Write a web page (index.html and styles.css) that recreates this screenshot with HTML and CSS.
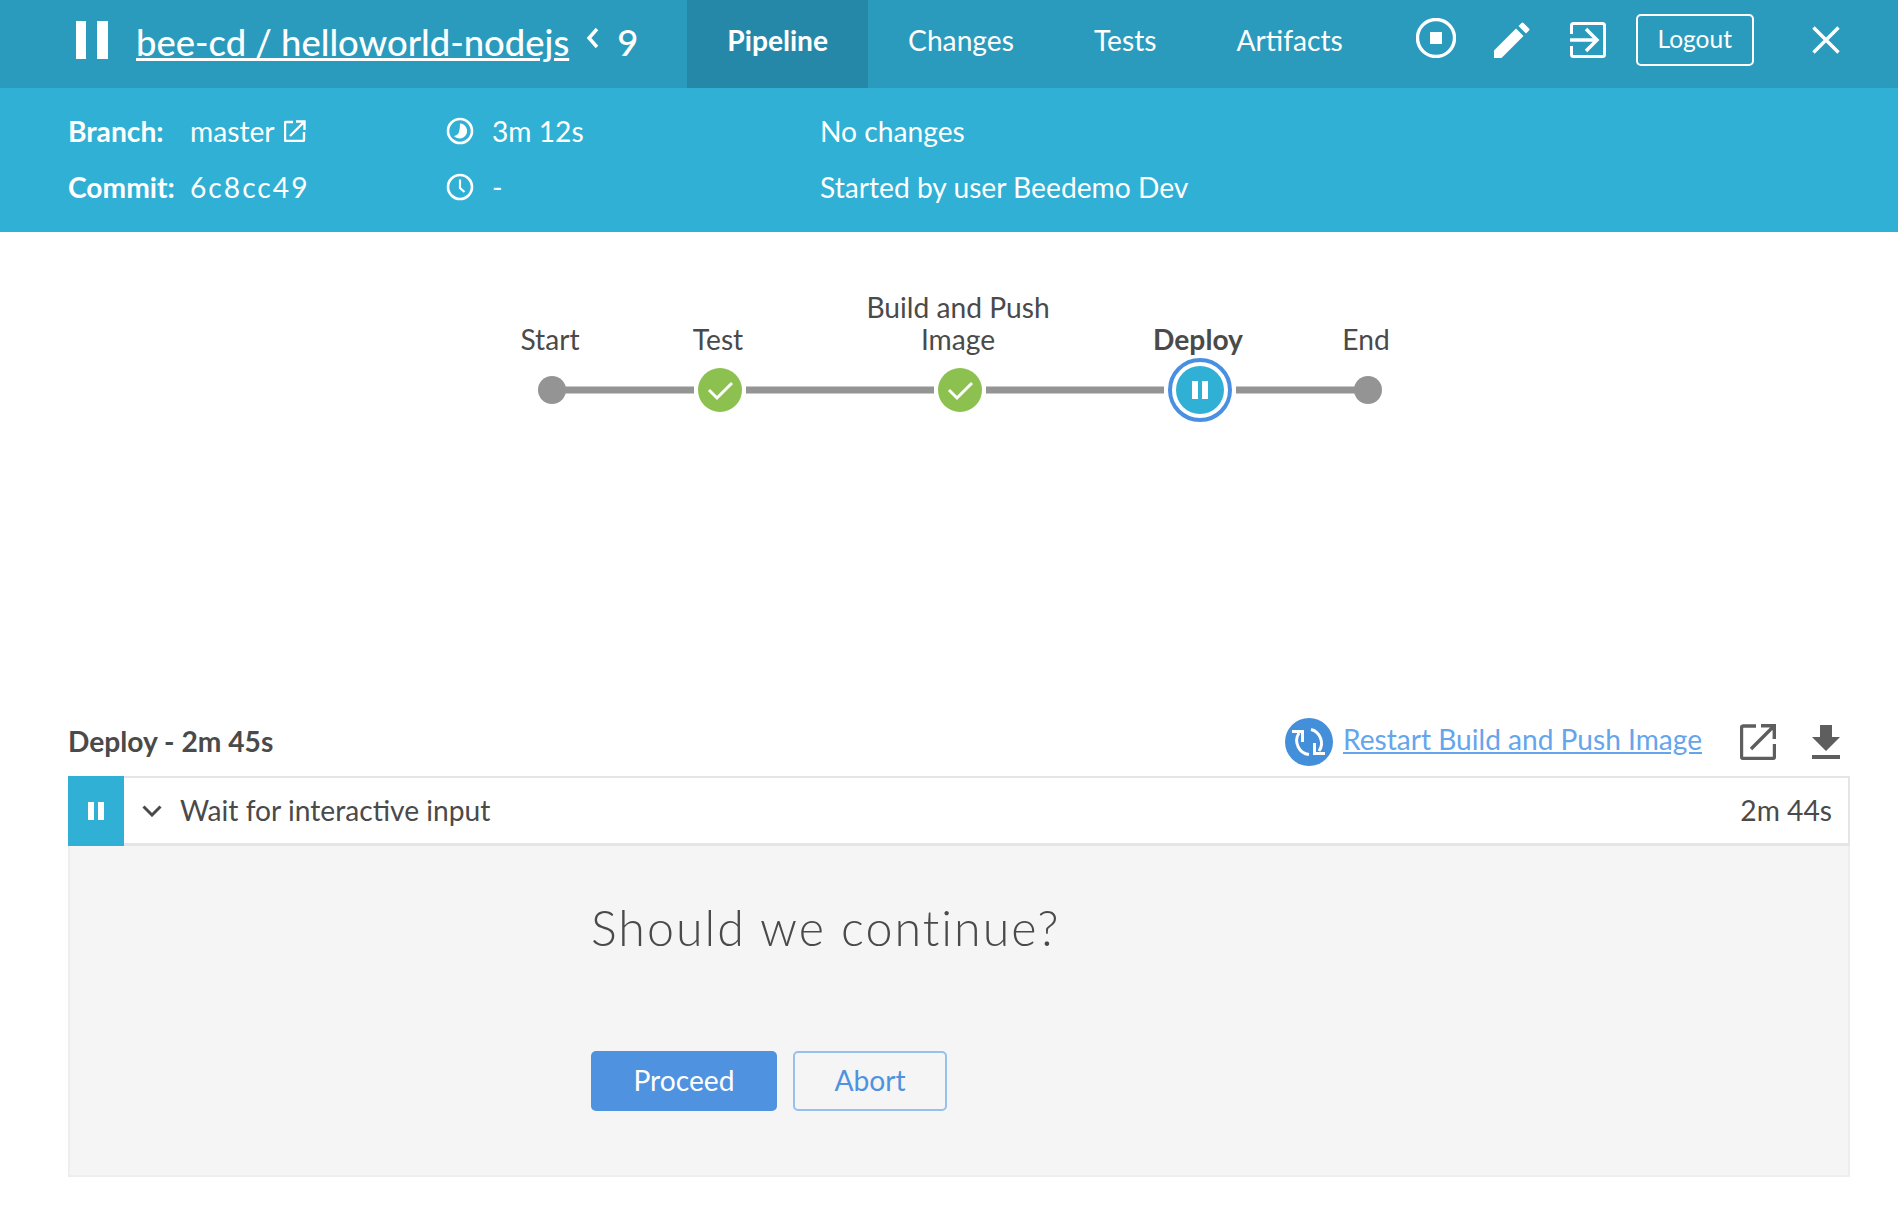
FILE: index.html
```html
<!DOCTYPE html>
<html lang="en">
<head>
    <meta charset="UTF-8">
    <meta name="viewport" content="width=device-width, initial-scale=1.0">
    <title>bee-cd / helloworld-nodejs #9</title>
    <link rel="stylesheet" href="styles.css">
</head>
<body>
    <header class="top-bar">
        <svg class="run-state" width="32" height="38" viewBox="0 0 32 38"><rect width="10" height="38"/><rect x="21" width="11" height="38"/></svg>
        <a class="run-title" href="#">bee-cd / helloworld-nodejs</a>
        <svg class="run-chevron" width="13" height="22" viewBox="0 0 13 22"><path d="M11 2 3 11l8 9" fill="none" stroke="#fff" stroke-width="3.4"/></svg>
        <span class="run-number">9</span>
        <nav class="tabs">
            <a class="tab tab-active" href="#">Pipeline</a>
            <a class="tab" href="#">Changes</a>
            <a class="tab" href="#">Tests</a>
            <a class="tab" href="#">Artifacts</a>
        </nav>
        <div class="actions">
            <svg class="action-stop" width="40" height="40" viewBox="0 0 40 40"><circle cx="20" cy="20" r="18.5" fill="none" stroke="#fff" stroke-width="3.4"/><rect x="14" y="14" width="12" height="12" fill="#fff"/></svg>
            <svg class="action-edit" width="36" height="36" viewBox="0 0 36 36"><path d="M0 28.500 22 6.500 29.500 14 7.500 36H0zM24.500 4l3-3q1-1 2 0l5.500 5.500q1 1 0 2l-3 3z" fill="#fff"/></svg>
            <svg class="action-exit" width="36" height="36" viewBox="0 0 36 36"><path d="M1.500 12V3.500q0-2 2-2h29q2 0 2 2v29q0 2-2 2h-29q-2 0-2-2V24" fill="none" stroke="#fff" stroke-width="3"/><path d="M0 18h27M16 7l11 11-11 11" fill="none" stroke="#fff" stroke-width="3.400"/></svg>
            <button class="logout" type="button">Logout</button>
            <svg class="action-close" width="28" height="28" viewBox="0 0 28 28"><path d="M1.500 1.500l25 25M26.500 1.500l-25 25" fill="none" stroke="#fff" stroke-width="3.400"/></svg>
        </div>
    </header>

    <section class="run-info">
        <div class="info-labels">
            <div class="info-row"><b class="info-label">Branch:</b><span>master</span>
                <svg class="ext-link" width="22" height="22" viewBox="0 0 22 22"><path d="M9 2H2q-1 0-1 1v17q0 1 1 1h17q1 0 1-1v-8" fill="none" stroke="#fff" stroke-width="2.400"/><path d="M6 16 19 3M12 1.500h8.500V10" fill="none" stroke="#fff" stroke-width="2.400"/></svg>
            </div>
            <div class="info-row"><b class="info-label">Commit:</b><span class="commit">6c8cc49</span></div>
        </div>
        <div class="info-times">
            <div class="info-row">
                <svg class="info-icon" width="28" height="28" viewBox="0 0 28 28"><circle cx="14" cy="14" r="12" fill="none" stroke="#fff" stroke-width="2.600"/><path d="M14 6.500A7.500 7.500 0 1 1 8 19q4-1 5-4 1-3 1-8.500z" fill="#fff"/></svg>
                <span>3m 12s</span>
            </div>
            <div class="info-row">
                <svg class="info-icon" width="28" height="28" viewBox="0 0 28 28"><circle cx="14" cy="14" r="12" fill="none" stroke="#fff" stroke-width="2.600"/><path d="M14 6.500V15l4.500 4" fill="none" stroke="#fff" stroke-width="2.200"/></svg>
                <span>-</span>
            </div>
        </div>
        <div class="info-changes">
            <div class="info-row">No changes</div>
            <div class="info-row">Started by user Beedemo Dev</div>
        </div>
    </section>

    <section class="graph">
        <svg width="1898" height="468" viewBox="0 232 1898 468">
            <g class="graph-lines">
                <path d="M552 390H694M746 390H934M986 390H1164M1236 390H1368"/>
            </g>
            <circle cx="552" cy="390" r="14" fill="#949494"/>
            <circle cx="1368" cy="390" r="14" fill="#949494"/>

            <circle cx="720" cy="390" r="22" fill="#8cc04f"/>
            <path d="M709 390l8 8 15-15" class="graph-check"/>
            <circle cx="960" cy="390" r="22" fill="#8cc04f"/>
            <path d="M949 390l8 8 15-15" class="graph-check"/>

            <circle cx="1200" cy="390" r="30" fill="#fff" stroke="#4a90e2" stroke-width="4"/>
            <circle cx="1200" cy="390" r="24" fill="#30b0d5"/>
            <rect x="1192" y="381" width="6" height="18" fill="#fff"/>
            <rect x="1202" y="381" width="6" height="18" fill="#fff"/>

            <text class="graph-label" x="550" y="350" text-anchor="middle">Start</text>
            <text class="graph-label" x="718" y="350" text-anchor="middle">Test</text>
            <text class="graph-label" x="958" y="318" text-anchor="middle">Build and Push</text>
            <text class="graph-label" x="958" y="350" text-anchor="middle">Image</text>
            <text class="graph-label graph-label-bold" x="1198" y="350" text-anchor="middle">Deploy</text>
            <text class="graph-label" x="1366" y="350" text-anchor="middle">End</text>
        </svg>
    </section>

    <section class="log">
        <div class="log-head">
            <h2 class="log-title">Deploy - 2m 45s</h2>
            <svg class="restart-icon" width="48" height="48" viewBox="0 0 48 48">
                <circle cx="24" cy="24" r="24" fill="#448fd9"/>
                <path d="M14 15A14 14 0 0 0 24 36.500M26 11.500A14 14 0 0 1 34 33" fill="none" stroke="#fff" stroke-width="3"/>
                <path d="M7 13.500H17.500V24M29.500 25V35.500H40" fill="none" stroke="#fff" stroke-width="3"/>
            </svg>
            <a class="restart-link" href="#">Restart Build and Push Image</a>
            <svg class="log-open" width="36" height="36" viewBox="0 0 36 36"><path d="M16 2H3.500q-2 0-2 2v28.500q0 2 2 2h29q2 0 2-2V20" fill="none" stroke="#5e5e5e" stroke-width="3.400"/><path d="M11 25 33 3M21 1.700h13.300V15" fill="none" stroke="#5e5e5e" stroke-width="3.400"/></svg>
            <svg class="log-download" width="28" height="34" viewBox="0 0 28 34"><path d="M8 0h12v12h8L14 26 0 12h8zM0 30h28v4H0z" fill="#5e5e5e"/></svg>
        </div>
        <div class="step">
            <div class="step-status">
                <svg width="16" height="18" viewBox="0 0 16 18"><rect width="6" height="18" fill="#fff"/><rect x="10" width="6" height="18" fill="#fff"/></svg>
            </div>
            <svg class="step-chevron" width="20" height="12" viewBox="0 0 20 12"><path d="M1.500 1.500 10 10l8.500-8.500" fill="none" stroke="#4a4a4a" stroke-width="3"/></svg>
            <span class="step-name">Wait for interactive input</span>
            <span class="step-time">2m 44s</span>
        </div>
        <div class="input-box">
            <h3 class="input-question">Should we continue?</h3>
            <div class="input-buttons">
                <button class="btn btn-proceed" type="button">Proceed</button>
                <button class="btn btn-abort" type="button">Abort</button>
            </div>
        </div>
    </section>
</body>
</html>
```

FILE: styles.css
```css
* {
    box-sizing: border-box;
}

body {
    margin: 0;
    background: #fff;
    color: #4a4a4a;
    font-family: Lato, "Open Sans", sans-serif;
    font-size: 28.2px;
}

svg {
    display: block;
    flex: none;
}

/* header */
.top-bar {
    display: flex;
    align-items: center;
    height: 88px;
    padding-left: 76px;
    background: #2b9bbd;
    color: #fff;
}

.run-state {
    margin-top: -8px;
}

.run-state rect {
    fill: #fff;
}

.run-title {
    margin-left: 28px;
    padding-bottom: 5px;
    color: #fff;
    font-size: 36.4px;
    font-weight: 500;
    white-space: nowrap;
    text-decoration-thickness: 3px;
}

.run-chevron {
    margin-left: 17px;
    margin-top: -12px;
}

.run-number {
    margin-left: 18px;
    padding-bottom: 5px;
    font-size: 36.4px;
    font-weight: 500;
}

.tabs {
    display: flex;
    margin-left: 49px;
    align-self: stretch;
}

.tab {
    display: flex;
    align-items: center;
    padding: 0 40px 9px;
    color: #fff;
    text-decoration: none;
}

.tab-active {
    background: #2688a8;
    font-weight: 700;
}

.actions {
    display: flex;
    align-items: center;
    margin-left: 33px;
    padding-bottom: 8px;
}

.action-stop {
    margin-top: -4px;
}

.action-edit {
    margin-left: 38px;
}

.action-exit {
    margin-left: 40px;
}

.logout {
    width: 118px;
    height: 52px;
    margin-left: 30px;
    padding-bottom: 4px;
    border: 2px solid #fff;
    border-radius: 5px;
    background: transparent;
    color: #fff;
    font-family: inherit;
    font-size: 24.5px;
}

.action-close {
    margin-left: 58px;
}

/* run details */
.run-info {
    display: flex;
    height: 144px;
    padding: 15px 0 0 68px;
    background: #30b0d5;
    color: #fff;
}

.info-row {
    display: flex;
    align-items: center;
    height: 56px;
    white-space: nowrap;
}

.info-labels {
    width: 378px;
}

.info-label {
    width: 122px;
}

.commit {
    letter-spacing: 2px;
}

.ext-link {
    margin-left: 9px;
}

.info-times {
    width: 374px;
}

.info-icon {
    margin-right: 18px;
}

/* pipeline graph */
.graph {
    height: 468px;
}

.graph-lines path {
    fill: none;
    stroke: #949494;
    stroke-width: 7;
}

.graph-check {
    fill: none;
    stroke: #fff;
    stroke-width: 3;
}

.graph-label {
    fill: #4a4a4a;
    font-size: 28.2px;
}

.graph-label-bold {
    font-weight: 700;
}

/* log */
.log {
    padding: 0 48px 0 68px;
}

.log-head {
    display: flex;
    align-items: center;
    height: 76px;
    padding-top: 8px;
}

.log-title {
    flex: 1;
    margin: 0 0 2px;
    font-size: 28.2px;
    font-weight: 700;
}

.restart-link {
    margin-left: 10px;
    margin-right: 1px;
    margin-top: -6px;
    color: #65a5ec;
    font-size: 28.1px;
}

.log-open {
    margin-left: 37px;
}

.log-download {
    margin-left: 36px;
    margin-right: 10px;
}

.step {
    display: flex;
    align-items: center;
    height: 70px;
    padding-right: 16px;
    background: #fff;
    border: 2px solid #e5e5e5;
    border-left: 0;
    border-bottom-width: 3px;
}

.step-status {
    display: flex;
    align-items: center;
    justify-content: center;
    align-self: stretch;
    width: 56px;
    margin: -2px 0 -3px;
    background: #30b0d5;
}

.step-chevron {
    margin-left: 18px;
}

.step-name {
    flex: 1;
    margin-left: 18px;
    padding-bottom: 2px;
}

.step-time {
    padding-bottom: 2px;
}

.input-box {
    height: 331px;
    padding: 52px 0 0 521px;
    background: #f5f5f5;
    border: 2px solid #eee;
    border-top: 0;
}

.input-question {
    margin: 0;
    font-size: 48.4px;
    font-weight: 300;
    letter-spacing: 2px;
}

.input-buttons {
    display: flex;
    gap: 16px;
    margin-top: 95px;
}

.btn {
    height: 60px;
    padding-bottom: 3px;
    border-radius: 5px;
    font-family: inherit;
    font-size: 28.2px;
}

.btn-proceed {
    width: 186px;
    border: 0;
    background: #4f92e0;
    color: #fff;
}

.btn-abort {
    width: 154px;
    border: 2px solid #95c0ef;
    background: transparent;
    color: #4f92e0;
}
```
